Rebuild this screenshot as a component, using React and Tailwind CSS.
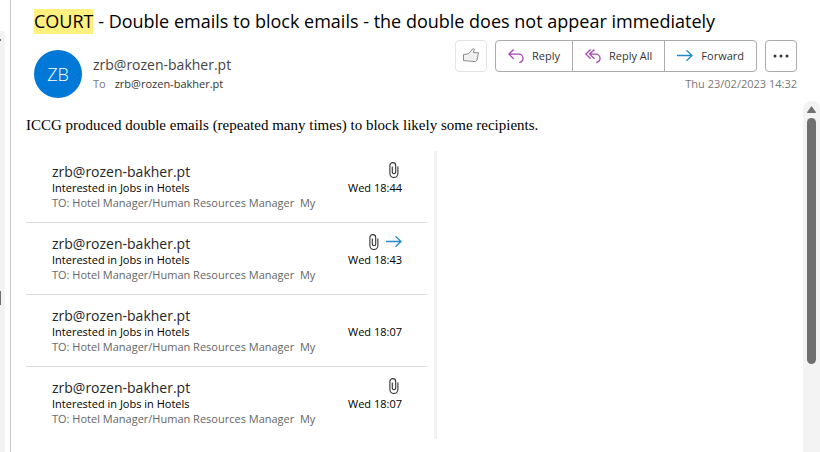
import React from "react";

// ─── data ────────────────────────────────────────────────────────────────────
const SENDER = "zrb@rozen-bakher.pt";

const EMAILS = [
  { id: 1, time: "Wed 18:44", attachment: true, forwarded: false },
  { id: 2, time: "Wed 18:43", attachment: true, forwarded: true },
  { id: 3, time: "Wed 18:07", attachment: false, forwarded: false },
  { id: 4, time: "Wed 18:07", attachment: true, forwarded: false },
];

// ─── icons ───────────────────────────────────────────────────────────────────
function ThumbIcon() {
  return (
    <svg width="18" height="18" viewBox="0 0 18 18" fill="#f1f1f1" stroke="#8a8a8a" aria-hidden="true">
      <path d="M1.5 7.5 6.5 6.8 11 1.5 12.4 2.2 11.4 5.5 16.5 5.8 15 13 13.6 14.6 6.5 14 1.5 13.6Z" />
    </svg>
  );
}

function ReplyIcon() {
  return (
    <svg width="16" height="16" viewBox="0 0 17 17" fill="none" stroke="#a846b5" strokeWidth="1.4" aria-hidden="true">
      <path d="M6 1.5 1 6.5l5 5M1 6.5h10.5A4.5 4.5 0 0 1 16 11c0 2.3-1.5 4-4 4.5" />
    </svg>
  );
}

function ReplyAllIcon() {
  return (
    <svg width="16" height="16" viewBox="0 0 17 17" fill="none" stroke="#a846b5" strokeWidth="1.4" aria-hidden="true">
      <path d="M6 1.5 1 6.5l5 5M10 1.5 5 6.5l5 5M5 6.5h6.5A4.5 4.5 0 0 1 16 11c0 2.3-1.5 4-4 4.5" />
    </svg>
  );
}

function ArrowIcon() {
  return (
    <svg width="16" height="12" viewBox="0 0 16 12" fill="none" stroke="#1e8bcd" strokeWidth="1.3" aria-hidden="true">
      <path d="M0 5.5h15M9.5.3 15 5.5l-5.5 5.2" />
    </svg>
  );
}

function ClipIcon() {
  return (
    <svg width="10" height="17" viewBox="0 1 10 17" fill="none" stroke="#333333" strokeWidth="1.1" aria-hidden="true">
      <path d="M3.3 5.500v5.500a1.700 1.700 0 0 0 3.400 0V4.500a2.900 2.900 0 0 0-5.800 0v8a4 4 0 0 0 8 0V5.500" />
    </svg>
  );
}

function DotsIcon() {
  return (
    <svg width="16" height="4" viewBox="0 0 16 4" fill="#333333" aria-hidden="true">
      <circle cx="2" cy="2" r="1.5" />
      <circle cx="8" cy="2" r="1.5" />
      <circle cx="14" cy="2" r="1.5" />
    </svg>
  );
}

// ─── header ──────────────────────────────────────────────────────────────────
function Actions() {
  return (
    <div className="flex gap-2 text-[11px] text-[#333333]">
      <button
        type="button"
        aria-label="Like"
        className="flex size-8 items-center justify-center rounded border border-[#e4e4e4]"
      >
        <ThumbIcon />
      </button>
      <div className="flex h-8 divide-x divide-[#ababab] rounded border border-[#ababab]">
        <button type="button" className="flex items-center gap-2 px-3">
          <ReplyIcon />
          Reply
        </button>
        <button type="button" className="flex items-center gap-2 px-3">
          <ReplyAllIcon />
          Reply All
        </button>
        <button type="button" className="flex items-center gap-2 px-3">
          <ArrowIcon />
          Forward
        </button>
      </div>
      <button
        type="button"
        aria-label="More actions"
        className="flex size-8 items-center justify-center rounded border border-[#ababab]"
      >
        <DotsIcon />
      </button>
    </div>
  );
}

function MessageHeader() {
  return (
    <header className="px-[23px] pt-[9px]">
      <h1 className="text-[18px] leading-[25px] whitespace-nowrap text-black">
        <mark className="inline-block bg-[#fff07f] text-black">COURT</mark> - Double emails to block emails - the
        double does not appear immediately
      </h1>
      <div className="flex justify-between pt-[6px]">
        <div className="flex items-center gap-[11px] pt-[10px]">
          <div className="flex size-12 items-center justify-center rounded-full bg-[#0078d7] text-[18px] font-light text-white">
            ZB
          </div>
          <div>
            <p className="text-[14px] leading-[20px] text-[#444444]">{SENDER}</p>
            <p className="flex gap-[9px] text-[11px] leading-[18px] text-[#333333]">
              <span className="text-[#777777]">To</span>
              {SENDER}
            </p>
          </div>
        </div>
        <div className="flex flex-col items-end gap-[3px]">
          <Actions />
          <time className="text-[11px] leading-[18px] text-[#777777]">Thu 23/02/2023 14:32</time>
        </div>
      </div>
    </header>
  );
}

// ─── list of emails in the body ──────────────────────────────────────────────
function EmailRow({ email }) {
  return (
    <li className="flex h-[72px] justify-between border-b border-[#dcdcdc] pt-[11px] pr-[25px] pl-[26px] last:border-b-0">
      <div className="whitespace-nowrap">
        <p className="h-[18px] text-[14px] leading-[20px] text-[#262626]">{SENDER}</p>
        <p className="text-[11px] leading-[15px] text-black">Interested in Jobs in Hotels</p>
        <p className="text-[11px] leading-[15px] whitespace-pre text-[#666666]">
          {"TO: Hotel Manager/Human Resources Manager  My"}
        </p>
      </div>
      <div className="flex flex-col items-end">
        <div className="flex h-[18px] items-start gap-[7px]">
          {email.attachment && (
            <span className={email.forwarded ? "" : "mr-[3px]"}>
              <ClipIcon />
            </span>
          )}
          {email.forwarded && (
            <span className="pt-[2px]">
              <ArrowIcon />
            </span>
          )}
        </div>
        <time className="text-[11px] leading-[15px] text-black">{email.time}</time>
      </div>
    </li>
  );
}

function MessageBody() {
  return (
    <article className="min-w-0 flex-1 pt-[14px] pl-[15px]">
      <p className="font-['Liberation_Serif',serif] text-[15px] leading-[20px] text-black">
        ICCG produced double emails (repeated many times) to block likely some recipients.
      </p>
      <div className="mt-4 max-w-[411px] border-r-[3px] border-[#f2f2f2] pr-[7px]">
        <ul>
          {EMAILS.map((email) => (
            <EmailRow key={email.id} email={email} />
          ))}
        </ul>
      </div>
    </article>
  );
}

function Scrollbar() {
  return (
    <div className="flex w-[17px] flex-col items-center rounded-t-lg bg-[#f3f3f3] pt-[5px]" aria-hidden="true">
      <svg width="9" height="7" viewBox="0 0 9 7" fill="#707070">
        <path d="M4.5 0 9 6.2 8.5 7H.5L0 6.2Z" />
      </svg>
      <div className="mt-[5px] h-[71%] w-[9px] rounded-full bg-[#707070]" />
    </div>
  );
}

function App() {
  return (
    <div className="flex h-screen overflow-hidden bg-white font-['Open_Sans','Noto_Sans',sans-serif]">
      {/* edge of the message list */}
      <div className="flex w-[10px] flex-col pt-[31px] pr-[5px]" aria-hidden="true">
        <div className="flex flex-1 flex-col rounded-tr bg-[#f3f3f3] pt-[8px]">
          <div className="h-[2px] w-px bg-[#707070]" />
          <div className="mt-[250px] h-[14px] w-px bg-[#707070]" />
        </div>
      </div>

      <main className="flex min-w-0 flex-1 flex-col border-l border-[#c8c8c8]">
        <MessageHeader />
        <div className="mt-[3px] flex min-h-0 flex-1">
          <MessageBody />
          <Scrollbar />
        </div>
      </main>
    </div>
  );
}

export default App;
